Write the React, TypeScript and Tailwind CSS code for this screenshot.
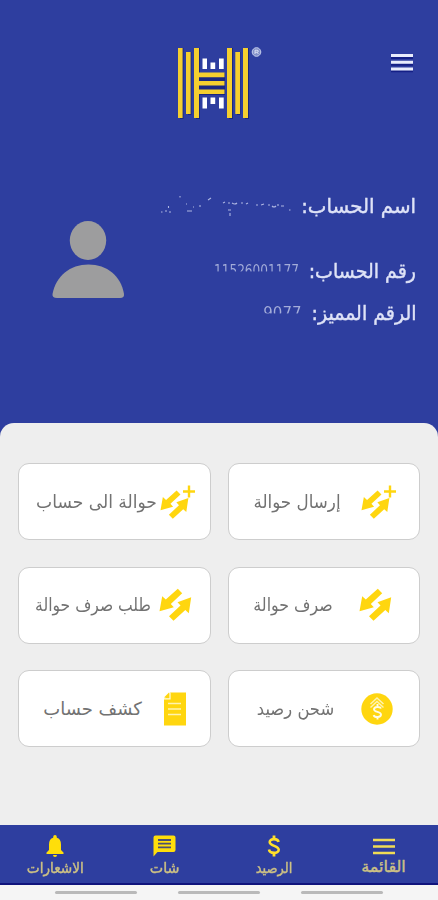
import type { ReactNode } from "react";

type ServiceCard = {
  label: string;
  icon: ReactNode;
  iconClass: string;
  labelClass: string;
};

type NavItem = {
  label: string;
  icon: ReactNode;
  className: string;
  labelClass: string;
};

function Logo() {
  return (
    <svg width="86" height="74" viewBox="0 0 86 74" className="ml-[177px]" aria-hidden="true">
      <path
        fill="#1a2780"
        d="M3 1h3.500v71H3zM11 5h3.500v63H11zM19 1h4v71h-4zM52 1h4v71h-4zM60 5h3.500v63H60zM68 1h4v71h-4zM22 26h26v22H22z"
      />
      <path
        fill="#f5cf2f"
        d="M1 1h4.600v70H1zM9 5h4.600v62H9zM17 1h5v70h-5zM50 1h5v70h-5zM58.300 5H63v62h-4.700zM66 1h5v70h-5zM20 25.500h27.500v4.700H20zM20 34h27.500v4.500H20zM20 42.500h27.500V47H20z"
      />
      <path
        fill="#ffffff"
        d="M25.500 11.500H30V22h-4.500zM33.500 15.500h4.700V22h-4.700zM42 11.500h4.700V22H42zM25.500 50.500H30v11h-4.500zM33.500 50.500h4.700v6.500h-4.700zM42 50.500h4.700v11H42z"
      />
      <circle cx="79.500" cy="5" r="4.300" fill="#8390c8" stroke="#c8d0ee" />
      <path d="M78 7V3.200h2q1.400 0 1.400 1t-1.400 1h-2m2 0 1.400 1.800" fill="none" stroke="#eef0fc" strokeWidth=".8" />
    </svg>
  );
}

function MenuBars() {
  return (
    <svg width="24" height="20" viewBox="0 0 24 20" aria-hidden="true">
      <path d="M1 5h22M1 11.700h22M1 18.300h22" stroke="#141f86" strokeWidth="2" />
      <path d="M1 2.500h22M1 9.200h22M1 16h22" stroke="#e8ecfc" strokeWidth="3" />
    </svg>
  );
}

function Avatar() {
  return (
    <svg width="74" height="80" viewBox="0 0 74 80" fill="#9d9d9e" aria-hidden="true">
      <ellipse cx="36" cy="19.500" rx="18.200" ry="19.500" />
      <path d="M.5 73C4 55 18 43.500 36.500 43.500S69 55 72 73q.5 4-4 4H5q-5 0-4.500-4z" />
    </svg>
  );
}

function TransferIcon({ plus = false }: { plus?: boolean }) {
  return (
    <svg width="38" height="36" viewBox="0 0 38 36" fill="#ffd60f" aria-hidden="true">
      <g transform={plus ? "translate(.3 4.900) scale(.88)" : undefined}>
        <path d="M20.800 1.700 25.200 6.300 13.800 17l3 3.300-14.300 3.900L5.200 9.200l3.600 3.300z" />
        <path d="M12 29.300 23.500 18.600l-3-3.300 13.700-5.100-2.400 16.100-3.500-3.300-11.800 10.800z" />
      </g>
      {plus ? <path d="M31 1.500v12M25 7.500h12" stroke="#ffd60f" strokeWidth="2.400" /> : null}
    </svg>
  );
}

function CoinIcon() {
  return (
    <svg width="32" height="32" viewBox="0 0 32 32" aria-hidden="true">
      <circle cx="16" cy="16" r="15.700" fill="#ffd60f" />
      <path d="m9.500 11 6.500-6 6.500 6M9.500 14.500l6.500-6 6.500 6" fill="none" stroke="#fff3b0" strokeWidth="1.500" />
      <path
        d="M20 15.500c-.8-2-7-2.400-7 .8 0 3.300 7 2 7 5.300 0 3.200-6.400 3.200-7.400.5M16.500 11v3M16.500 24v2.500"
        fill="none"
        stroke="#fffbe6"
        strokeWidth="1.900"
      />
    </svg>
  );
}

function StatementIcon() {
  return (
    <svg width="24" height="34" viewBox="0 0 24 34" aria-hidden="true">
      <path d="M7 .5h16v33H1V7z" fill="#ffd60f" />
      <path d="M1 5.500 6 .5V5.500z" fill="#ffd60f" />
      <path d="M1 6.800h6V.5" fill="none" stroke="#fffbe0" strokeWidth="1.200" />
      <path d="M5 11.500h13M5 17h13M5 22.500h13" stroke="#fff3b0" strokeWidth="1.400" />
    </svg>
  );
}

function BellIcon() {
  return (
    <svg width="20" height="23" viewBox="0 0 20 23" fill="#ffde0a" aria-hidden="true">
      <path d="M10 0q1.800 0 1.800 2v.8Q16 4 16 9.500V15l2.500 2.500v1.500h-17v-1.500L4 15V9.500Q4 4 8.200 2.800V2Q8.200 0 10 0zM8 20h4q0 2-2 2t-2-2z" />
    </svg>
  );
}

function ChatIcon() {
  return (
    <svg width="23" height="23" viewBox="0 0 23 23" aria-hidden="true">
      <path d="M2.500.5h18q2 0 2 2V15q0 2-2 2h-16L.5 21.500v-19q0-2 2-2z" fill="#ffde0a" />
      <path d="M5 5h13M5 8.700h13M5 12.400h13" stroke="#4d5070" strokeWidth="1.800" />
    </svg>
  );
}

function DollarIcon() {
  return (
    <svg width="14" height="22" viewBox="0 0 14 22" fill="none" stroke="#ffe02b" aria-hidden="true">
      <path d="M11.500 7C11 3.200 2.700 3.200 2.700 7c0 4.300 9 3.500 9 7.800 0 4-9 4.200-9.700-.3" strokeWidth="2.600" />
      <path d="M7 .5v4M7 17.500v4" strokeWidth="2.800" />
    </svg>
  );
}

function ListIcon() {
  return (
    <svg width="22" height="18" viewBox="0 0 22 18" aria-hidden="true">
      <path d="M0 2h22M0 8.500h22M0 15h22" stroke="#f0db55" strokeWidth="2.600" />
    </svg>
  );
}

// What is left of the account name after it was wiped
function ErasedName() {
  return (
    <svg width="134" height="22" viewBox="0 0 134 22" fill="none" stroke="#aeb6e2" aria-hidden="true">
      <path
        d="M1 17h1.500M5 16h2M8.500 11v2M9 17h2M20 1v1.500M26 9h1M27 16h5M33 12h1M40 10v2M48 5l3-2M63 8l2-1M68 8h2M72 8q3 2 5 0M68 15h3M70 18v3M81 8h2M86 9l2-1M96 10h2M101 10l3-1M108 10h2M112 11q2 2 4 0M118 9v2M121 11h3M129 15h1.500"
        strokeWidth="1.100"
      />
    </svg>
  );
}

// Only the top half of the digits stays visible
function ErasedNumber({ value, className }: { value: string; className: string }) {
  return (
    <span
      dir="ltr"
      className={`block origin-right whitespace-nowrap bg-[linear-gradient(180deg,#a4add9_0%,#a4add9_48%,transparent_56%)] bg-clip-text leading-5 text-transparent ${className}`}
    >
      {value}
    </span>
  );
}

const cards: ServiceCard[] = [
  { label: "إرسال حوالة", icon: <TransferIcon plus />, iconClass: "w-[38px] mr-[22px]", labelClass: "mr-[18px] w-[88px] scale-x-[0.93]" },
  { label: "حوالة الى حساب", icon: <TransferIcon plus />, iconClass: "w-[38px] mr-[14px]", labelClass: "w-[123px] scale-x-[0.95]" },
  { label: "صرف حوالة", icon: <TransferIcon />, iconClass: "w-[38px] mr-[24px]", labelClass: "mr-[24px] w-[80px] scale-x-[0.88]" },
  { label: "طلب صرف حوالة", icon: <TransferIcon />, iconClass: "w-[38px] mr-[15px]", labelClass: "mr-[6px] w-[116px] scale-x-[0.865]" },
  { label: "شحن رصيد", icon: <CoinIcon />, iconClass: "w-[32px] mr-[26px]", labelClass: "mr-[27px] w-[77px] scale-x-[0.91]" },
  { label: "كشف حساب", icon: <StatementIcon />, iconClass: "w-[24px] mr-[23px]", labelClass: "mr-[20px] w-[100px]" },
];

const navItems: NavItem[] = [
  { label: "القائمة", icon: <ListIcon />, className: "w-[109px] pt-[13px]", labelClass: "-mt-[3px] text-[16px]" },
  { label: "الرصيد", icon: <DollarIcon />, className: "w-[110px] pt-[10px]", labelClass: "mt-px text-[15px] scale-x-[0.87]" },
  { label: "شات", icon: <ChatIcon />, className: "w-[109px] pt-[10px]", labelClass: "mt-px text-[15px] scale-x-[0.95]" },
  { label: "الاشعارات", icon: <BellIcon />, className: "w-[110px] pt-[10px]", labelClass: "mt-px text-[15px] scale-x-[0.91]" },
];

function AccountRow({ label, labelClass, children }: { label: string; labelClass: string; children: ReactNode }) {
  return (
    <div className="flex h-[32px] items-center">
      <span
        className={`origin-right whitespace-nowrap text-[20px] leading-8 text-[#dfe3f7] [-webkit-text-stroke:0.4px_#dfe3f7] ${labelClass}`}
      >
        {label}
      </span>
      {children}
    </div>
  );
}

export default function App() {
  return (
    <main
      dir="rtl"
      className="flex h-[900px] w-[438px] flex-col overflow-hidden bg-[#2e3e9f] font-['DejaVu_Sans','Noto_Sans',sans-serif]"
    >
      <header className="h-[423px] shrink-0">
        <div className="flex h-[126px] items-start justify-between pt-[47px]">
          <button type="button" aria-label="القائمة" className="mr-[24px] mt-[6px]">
            <MenuBars />
          </button>
          <Logo />
        </div>
        <div className="flex justify-between pt-[64px]">
          <div className="mr-[22px]">
            <AccountRow label="اسم الحساب:" labelClass="scale-x-[0.99]">
              <span className="mr-[6px]">
                <ErasedName />
              </span>
            </AccountRow>
            <div className="mt-[33px]">
              <AccountRow label="رقم الحساب:" labelClass="scale-x-[0.95]">
                <ErasedNumber value="11526001177" className="mr-[4px] scale-x-[0.81] text-[15px]" />
              </AccountRow>
            </div>
            <div className="mt-[10px]">
              <AccountRow label="الرقم المميز:" labelClass="scale-x-[0.95]">
                <ErasedNumber value="9077" className="mr-[4px] text-[15px]" />
              </AccountRow>
            </div>
          </div>
          <div className="ml-[52px] pt-[31px]">
            <Avatar />
          </div>
        </div>
      </header>

      <section className="h-[402px] shrink-0 rounded-t-[14px] bg-[#eeeeee] px-[18px] pt-[40px]">
        <div className="grid grid-cols-2 gap-x-[17px] gap-y-[26.500px]">
          {cards.map((card) => (
            <button
              key={card.label}
              type="button"
              className="flex h-[77px] items-center rounded-[11px] border-[1.500px] border-[#cdcdcd] bg-white"
            >
              <span className={`flex shrink-0 justify-center ${card.iconClass}`}>{card.icon}</span>
              <span
                className={`flex shrink-0 justify-center whitespace-nowrap text-[18px] leading-8 text-[#727272] ${card.labelClass}`}
              >
                {card.label}
              </span>
            </button>
          ))}
        </div>
      </section>

      <nav className="flex h-[60px] shrink-0 border-b-2 border-[#10147c] bg-[#2e3e9f]">
        {navItems.map((item) => (
          <button key={item.label} type="button" className={`flex flex-col items-center ${item.className}`}>
            <span className="flex h-[22px] items-start">{item.icon}</span>
            <span
              className={`whitespace-nowrap leading-5 text-[#cdc184] [-webkit-text-stroke:0.4px_#cdc184] ${item.labelClass}`}
            >
              {item.label}
            </span>
          </button>
        ))}
      </nav>

      <div className="flex h-[15px] shrink-0 justify-center gap-[41px] bg-[#f5f5f5] pt-[6px]">
        <span className="h-[3px] w-[82px] rounded-full bg-[#b9b9b9]" />
        <span className="h-[3px] w-[82px] rounded-full bg-[#b9b9b9]" />
        <span className="h-[3px] w-[82px] rounded-full bg-[#b9b9b9]" />
      </div>
    </main>
  );
}
